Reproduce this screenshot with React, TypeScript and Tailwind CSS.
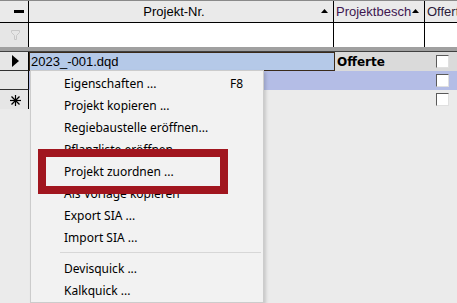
import React from 'react';

const menuItems = [
  { label: 'Eigenschaften ...', key: 'F8' },
  { label: 'Projekt kopieren ...' },
  { label: 'Regiebaustelle eröffnen...' },
  { label: 'Pflanzliste eröffnen' },
  { label: 'Projekt zuordnen ...' },
  { label: 'Als Vorlage kopieren' },
  { label: 'Export SIA ...' },
  { label: 'Import SIA ...' },
];

const menuItems2 = [{ label: 'Devisquick ...' }, { label: 'Kalkquick ...' }];

const SortUp = () => (
  <svg width="7" height="4" viewBox="0 0 7 4" className="shrink-0">
    <polygon points="3.5,0 7,4 0,4" fill="#000" />
  </svg>
);

const Funnel = () => (
  <svg width="9" height="10" viewBox="0 0 9 10" fill="none" stroke="#c8c8c8" strokeWidth="1">
    <path d="M0.5 0.5h8v2l-3 3v4h-2v-4l-3-3z" />
  </svg>
);

const Asterisk = () => (
  <svg width="11" height="11" viewBox="0 0 11 11" stroke="#000" strokeWidth="1.2">
    <line x1="5.5" y1="0" x2="5.5" y2="11" />
    <line x1="0" y1="5.5" x2="11" y2="5.5" />
    <line x1="1.5" y1="1.5" x2="9.5" y2="9.5" />
    <line x1="9.5" y1="1.5" x2="1.5" y2="9.5" />
  </svg>
);

const Arrow = () => (
  <svg width="7" height="12" viewBox="0 0 7 12">
    <polygon points="0,0 7,6 0,12" fill="#000" />
  </svg>
);

const Check = () => (
  <div className="w-[13px] h-[13px] bg-white border-t border-l border-t-[#5a5a5a] border-l-[#5a5a5a] border-b border-r border-b-[#e0e0e0] border-r-[#e0e0e0]" />
);

const Row = ({ sel, bg, children, last }: { sel?: React.ReactNode; bg: string; children?: React.ReactNode; last?: boolean }) => (
  <div className={`flex h-[19px] ${bg}`}>
    <div className={`w-[29px] shrink-0 border-r border-black bg-[#e6e6e6] flex items-center justify-center ${last ? 'border-b-0' : 'border-b border-b-[#303030]'}`}>
      {sel}
    </div>
    {children}
  </div>
);

export default function App() {
  return (
    <div className="relative w-[457px] h-[303px] overflow-hidden bg-[#ebebeb] font-['Liberation_Sans',Arial,sans-serif] text-black">
      {/* header */}
      <div className="flex h-[23px] border-b border-black border-t border-t-[#8a8a8a] bg-[#eaeaea] text-[13px]">
        <div className="w-[29px] shrink-0 border-r border-black flex items-center justify-center pl-[9px]">
          <div className="w-[10px] h-[3px] bg-black" />
        </div>
        <div className="w-[305px] shrink-0 border-r border-black relative flex items-center justify-center pr-[14px]">
          <span>Projekt-Nr.</span>
          <div className="absolute right-[5px] top-[8px]"><SortUp /></div>
        </div>
        <div className="w-[91px] shrink-0 border-r border-black flex items-center pl-[2px] text-[#3e1650] overflow-hidden whitespace-nowrap">
          <span>Projektbesch</span>
          <span className="ml-[1px] mt-[-2px]"><SortUp /></span>
        </div>
        <div className="flex-1 min-w-0 flex items-center pl-[2px] overflow-hidden whitespace-nowrap text-[#2a1a3a]">
          <span className="block overflow-hidden">Offerte</span>
        </div>
      </div>

      {/* filter row */}
      <div className="flex h-[24px] bg-white">
        <div className="w-[29px] shrink-0 border-r border-black bg-[#e6e6e6] flex items-center justify-center pl-[2px]">
          <Funnel />
        </div>
        <div className="w-[305px] shrink-0 border-r border-black" />
        <div className="w-[91px] shrink-0 border-r border-black" />
        <div className="flex-1" />
      </div>
      <div className="h-[4px] bg-[#a0a0a0]" />
      <div className="h-px bg-[#404040]" />

      {/* rows */}
      <Row sel={<span className="pl-[2px]"><Arrow /></span>} bg="bg-[#dadada]">
        <div className="w-[306px] shrink-0 bg-[#b5c9e8] border border-[#3a2a1a] flex items-center pl-[1px] text-[13px] leading-none">2023_-001.dqd</div>
        <div className="w-[90px] shrink-0 flex items-center pl-[2px] font-['DejaVu_Sans',sans-serif] font-bold text-[12px]">Offerte</div>
        <div className="flex-1 flex items-center pl-[11px]"><Check /></div>
      </Row>
      <Row bg="bg-[#b4bde6]">
        <div className="w-[396px] shrink-0" />
        <div className="flex-1 flex items-center pl-[11px]"><Check /></div>
      </Row>
      <Row sel={<span className="pl-[2px] pt-[1px]"><Asterisk /></span>} bg="bg-[#ebebeb]" last>
        <div className="w-[396px] shrink-0" />
        <div className="flex-1 flex items-center pl-[11px]"><Check /></div>
      </Row>

      {/* context menu */}
      <div className="absolute left-[30px] top-[70px] w-[234px] h-[233px] bg-[#f2f2f2] border border-[#cccccc] pt-[2px] font-['Noto_Sans',sans-serif] text-[12px] shadow-[2px_2px_3px_rgba(0,0,0,0.15)]">
        {menuItems.map((it) => (
          <div key={it.label} className="flex items-center h-[22px] pl-[33px] pr-[20px] whitespace-nowrap">
            <span className="flex-1">{it.label}</span>
            {it.key && <span>{it.key}</span>}
          </div>
        ))}
        <div className="h-[9px] pt-[3px] pl-[29px] pr-[2px]">
          <div className="h-px bg-[#d7d7d7]" />
        </div>
        {menuItems2.map((it) => (
          <div key={it.label} className="flex items-center h-[22px] pl-[33px] whitespace-nowrap">
            {it.label}
          </div>
        ))}
      </div>

      {/* highlight */}
      <div className="absolute left-[38px] top-[149px] w-[190px] h-[45px] border-[8px] border-[#a1161f]" />
    </div>
  );
}
